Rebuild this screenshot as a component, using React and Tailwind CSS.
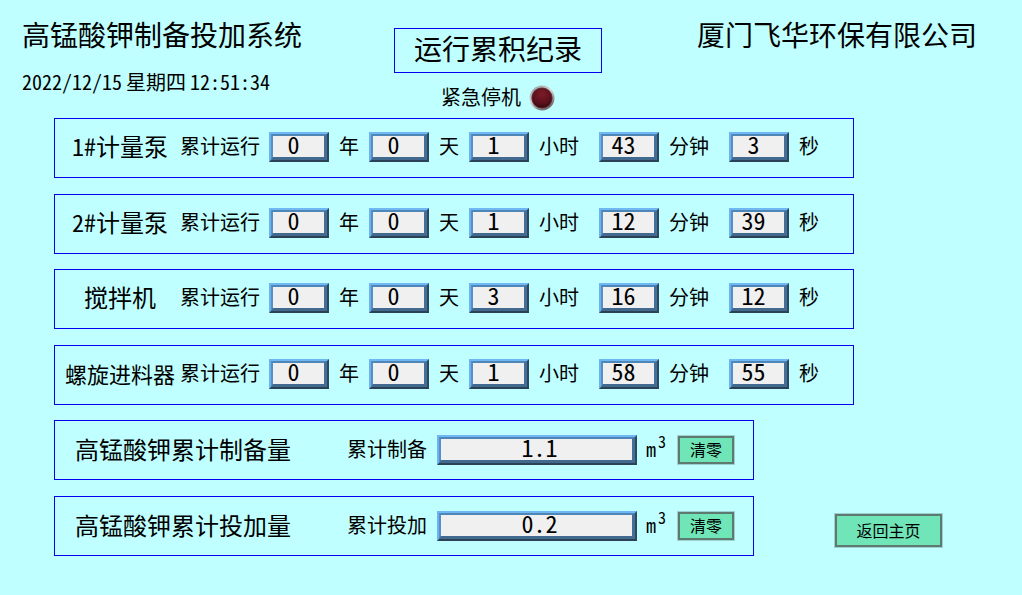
const RECORDS = [
  { name: '1#计量泵', size: 'text-[24px]', years: 0, days: 0, hours: 1, minutes: 43, seconds: 3 },
  { name: '2#计量泵', size: 'text-[24px]', years: 0, days: 0, hours: 1, minutes: 12, seconds: 39 },
  { name: '搅拌机', size: 'text-[24px]', years: 0, days: 0, hours: 3, minutes: 16, seconds: 12 },
  { name: '螺旋进料器', size: 'text-[22px]', years: 0, days: 0, hours: 1, minutes: 58, seconds: 55 },
];

const UNITS = [
  { key: 'years', label: '年', width: 'w-10' },
  { key: 'days', label: '天', width: 'w-10' },
  { key: 'hours', label: '小时', width: 'w-[70px]' },
  { key: 'minutes', label: '分钟', width: 'w-[70px]' },
  { key: 'seconds', label: '秒', width: 'w-10' },
];

const TOTALS = [
  { name: '高锰酸钾累计制备量', label: '累计制备', value: '1.1' },
  { name: '高锰酸钾累计投加量', label: '累计投加', value: '0.2' },
];

function Field({ id, label, value, className, inset }) {
  return (
    <div className={`h-[30px] border-2 border-t-[#70b8f4] border-l-[#6cb2ee] border-r-[#2f485e] border-b-[#2b4256] ${className}`}>
      <input
        id={id}
        aria-label={label}
        readOnly
        defaultValue={value}
        className={`block h-full w-full border-t-2 border-r-[3px] border-b-[3px] border-l-2 border-t-[#4f86b8] border-r-[#446f98] border-b-[#42698e] border-l-[#5590c4] bg-[#f0f0f0] pb-1.5 text-center text-[24px] leading-none text-black outline-none ${inset}`}
      />
    </div>
  );
}

function RecordRow({ record, index }) {
  return (
    <section className="flex h-[60px] w-fit items-start border border-[#0000f0] pt-[13px] pr-6 pl-[5px]">
      <h2 className={`flex h-[30px] w-[120px] items-center justify-center pb-[3px] whitespace-nowrap ${record.size}`}>{record.name}</h2>
      <span className="flex h-[30px] w-[89px] items-center pb-[3px] whitespace-nowrap text-[20px]">累计运行</span>
      {UNITS.map((unit) => {
        const id = `record-${index}-${unit.key}`;
        return (
          <div key={unit.key} className="flex">
            <Field id={id} label={`${record.name} ${unit.label}`} value={record[unit.key]} className="w-[60px]" inset="pr-2.5" />
            <label htmlFor={id} className={`flex h-[30px] items-center pb-[3px] pl-2.5 whitespace-nowrap text-[20px] ${unit.width}`}>{unit.label}</label>
          </div>
        );
      })}
    </section>
  );
}

function TotalRow({ total, index }) {
  const id = `total-${index}`;
  return (
    <section className="flex h-[60px] w-fit items-start border border-[#0000f0] pt-[14px] pr-[18px] pl-5">
      <h2 className="flex h-[30px] w-[272px] items-center pb-[3px] whitespace-nowrap text-[24px]">{total.name}</h2>
      <label htmlFor={id} className="flex h-[30px] w-[90px] items-center pb-[3px] whitespace-nowrap text-[20px]">{total.label}</label>
      <Field id={id} label={total.label} value={total.value} className="w-[200px]" inset="pl-1.5" />
      <span className="flex h-[30px] w-10 items-center pb-[3px] pl-[9px] text-[20px]">
        m<sup className="ml-0.5 text-[16px]">3</sup>
      </span>
      <button type="button" className="h-[30px] w-[58px] border border-[#9ccfcf] bg-[#70e6b8] text-[16px]">
        <span className="flex h-full items-center justify-center border-2 border-[#5e7a70] pb-0.5">清零</span>
      </button>
    </section>
  );
}

function Lamp() {
  return (
    <svg viewBox="0 0 26 26" className="h-[26px] w-[26px]" role="img" aria-label="紧急停机">
      <defs>
        <linearGradient id="rim" x1="0" y1="0" x2="0.6" y2="1">
          <stop offset="0" stopColor="#8a9496" />
          <stop offset="0.5" stopColor="#d8d4d4" />
          <stop offset="1" stopColor="#6a6666" />
        </linearGradient>
        <radialGradient id="lens" cx="0.5" cy="0.3" r="0.7">
          <stop offset="0" stopColor="#7c1c28" />
          <stop offset="0.7" stopColor="#5a101c" />
          <stop offset="1" stopColor="#350810" />
        </radialGradient>
      </defs>
      <circle cx="13" cy="13" r="12.5" fill="url(#rim)" />
      <circle cx="13" cy="13" r="10.6" fill="#5c3a40" />
      <circle cx="13" cy="13" r="9.8" fill="url(#lens)" />
    </svg>
  );
}

export default function App() {
  return (
    <main className="min-h-screen bg-[#c0ffff] font-['Noto_Sans_CJK_SC','Noto_Sans',sans-serif] leading-none text-black [font-feature-settings:'hwid']">
      <header className="flex items-start pr-[45px] pl-[22px]">
        <div className="w-[372px] pt-5">
          <h1 className="text-[28px]">高锰酸钾制备投加系统</h1>
          <p className="mt-6 whitespace-nowrap text-[20px]">
            <time className="flex gap-1">
              <span>2022/12/15</span>
              <span>星期四</span>
              <span>12:51:34</span>
            </time>
          </p>
        </div>
        <div className="flex flex-col items-center pt-7">
          <h2 className="border border-[#0000f0] px-[19px] pt-[5px] pb-2.5 text-[28px]">运行累积纪录</h2>
          <div className="mt-3 flex items-center gap-2 text-[20px]">
            <span className="pb-0.5">紧急停机</span>
            <Lamp />
          </div>
        </div>
        <p className="ml-auto pt-5 text-[28px]">厦门飞华环保有限公司</p>
      </header>
      <div className="flex items-end justify-between pt-[7px] pr-[79px] pl-[54px]">
        <div className="flex flex-col gap-[15px]">
          <div className="flex flex-col gap-4">
            {RECORDS.slice(0, 2).map((r, i) => <RecordRow key={r.name} record={r} index={i} />)}
          </div>
          <div className="flex flex-col gap-4">
            {RECORDS.slice(2).map((r, i) => <RecordRow key={r.name} record={r} index={i + 2} />)}
          </div>
          <div className="flex flex-col gap-4">
            {TOTALS.map((t, i) => <TotalRow key={t.name} total={t} index={i} />)}
          </div>
        </div>
        <button type="button" className="mb-2 -ml-5 h-[35px] w-[109px] shrink-0 border border-[#9ccfcf] bg-[#70e6b8] text-[16px]">
          <span className="flex h-full items-center justify-center border-2 border-[#5e7a70] pb-0.5">返回主页</span>
        </button>
      </div>
    </main>
  );
}
